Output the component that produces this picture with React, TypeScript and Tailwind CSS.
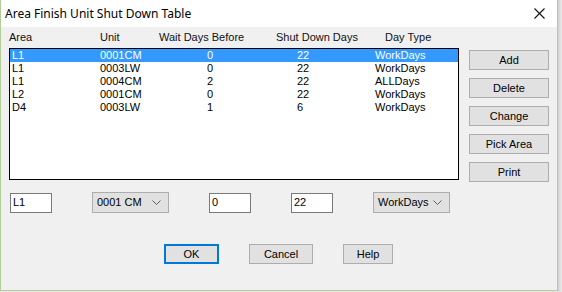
import React from "react";

const rows = [
  { area: "L1", unit: "0001CM", wait: "0", shut: "22", type: "WorkDays" },
  { area: "L1", unit: "0003LW", wait: "0", shut: "22", type: "WorkDays" },
  { area: "L1", unit: "0004CM", wait: "2", shut: "22", type: "ALLDays" },
  { area: "L2", unit: "0001CM", wait: "0", shut: "22", type: "WorkDays" },
  { area: "D4", unit: "0003LW", wait: "1", shut: "6", type: "WorkDays" },
];

const sideButtons = ["Add", "Delete", "Change", "Pick Area", "Print"];

function Chevron() {
  return (
    <svg width="9" height="5" viewBox="0 0 9 5" className="shrink-0">
      <path d="M0.5 0.5 L4.5 4.5 L8.5 0.5" fill="none" stroke="#606060" strokeWidth="1" />
    </svg>
  );
}

function TextBox({ value }: { value: string }) {
  return (
    <div className="flex h-[20px] w-[42px] items-center border border-[#7a7a7a] bg-white pl-[2px]">
      {value}
    </div>
  );
}

function Combo({ value }: { value: string }) {
  return (
    <div className="flex h-[21px] w-[77px] items-center justify-between border border-[#adadad] bg-[#e1e1e1] pr-[7px] pl-[4px]">
      <span>{value}</span>
      <Chevron />
    </div>
  );
}

function Button({ label, primary }: { label: string; primary?: boolean }) {
  return (
    <div
      className={
        primary
          ? "flex h-[20px] items-center justify-center border-2 border-[#0078d7] bg-[#e1e1e1]"
          : "flex h-[20px] items-center justify-center border border-[#adadad] bg-[#e1e1e1]"
      }
    >
      {label}
    </div>
  );
}

export default function App() {
  return (
    <div className="flex h-[292px] w-[562px] bg-[#e8e8e8] font-['Liberation_Sans',Arial,sans-serif] text-[11px] leading-none text-black">
      <div className="flex h-[291px] w-[558px] flex-col border-x border-b border-[#b3cd97]">
        {/* title bar */}
        <div className="flex h-[27px] shrink-0 items-center justify-between bg-white pr-[12px] pl-[4px]">
          <span className="font-['Noto_Sans',sans-serif] text-[12px] text-black">
            Area Finish Unit Shut Down Table
          </span>
          <svg width="11" height="11" viewBox="0 0 11 11">
            <path d="M0.5 0.5 L10.5 10.5 M10.5 0.5 L0.5 10.5" stroke="#111" strokeWidth="1.1" />
          </svg>
        </div>

        {/* body */}
        <div className="flex flex-1 flex-col bg-[#f0f0f0]">
          <div className="flex pt-[4px] pl-[8px]">
            <div className="flex flex-col">
              <div className="flex h-[13px] items-center text-[#111]">
                <span className="w-[91px]">Area</span>
                <span className="w-[59px]">Unit</span>
                <span className="w-[117px]">Wait Days Before</span>
                <span className="w-[109px]">Shut Down Days</span>
                <span>Day Type</span>
              </div>
              <div className="mt-[4px] h-[132px] w-[450px] border border-black bg-white">
                {rows.map((r, i) => (
                  <div
                    key={i}
                    className={
                      i === 0
                        ? "flex h-[13px] items-center bg-[#3399ff] pl-[2px] text-white"
                        : "flex h-[13px] items-center pl-[2px] text-black"
                    }
                  >
                    <span className="w-[88px]">{r.area}</span>
                    <span className="w-[107px]">{r.unit}</span>
                    <span className="w-[90px]">{r.wait}</span>
                    <span className="w-[78px]">{r.shut}</span>
                    <span>{r.type}</span>
                  </div>
                ))}
              </div>
              <div className="mt-[12px] flex items-center gap-[40px] pl-[1px]">
                <TextBox value="L1" />
                <Combo value="0001 CM" />
                <TextBox value="0" />
                <TextBox value="22" />
                <Combo value="WorkDays" />
              </div>
            </div>
            <div className="mt-[19px] ml-[10px] flex w-[80px] flex-col gap-[8px]">
              {sideButtons.map((b) => (
                <Button key={b} label={b} />
              ))}
            </div>
          </div>

          <div className="mt-[31px] flex justify-center gap-[30px] pr-[1px]">
            <div className="w-[55px]">
              <Button label="OK" primary />
            </div>
            <div className="w-[64px]">
              <Button label="Cancel" />
            </div>
            <div className="w-[50px]">
              <Button label="Help" />
            </div>
          </div>
        </div>
      </div>
      <div className="h-[292px] w-[4px] bg-gradient-to-r from-[#d0d0d0] to-[#ececec]" />
    </div>
  );
}
